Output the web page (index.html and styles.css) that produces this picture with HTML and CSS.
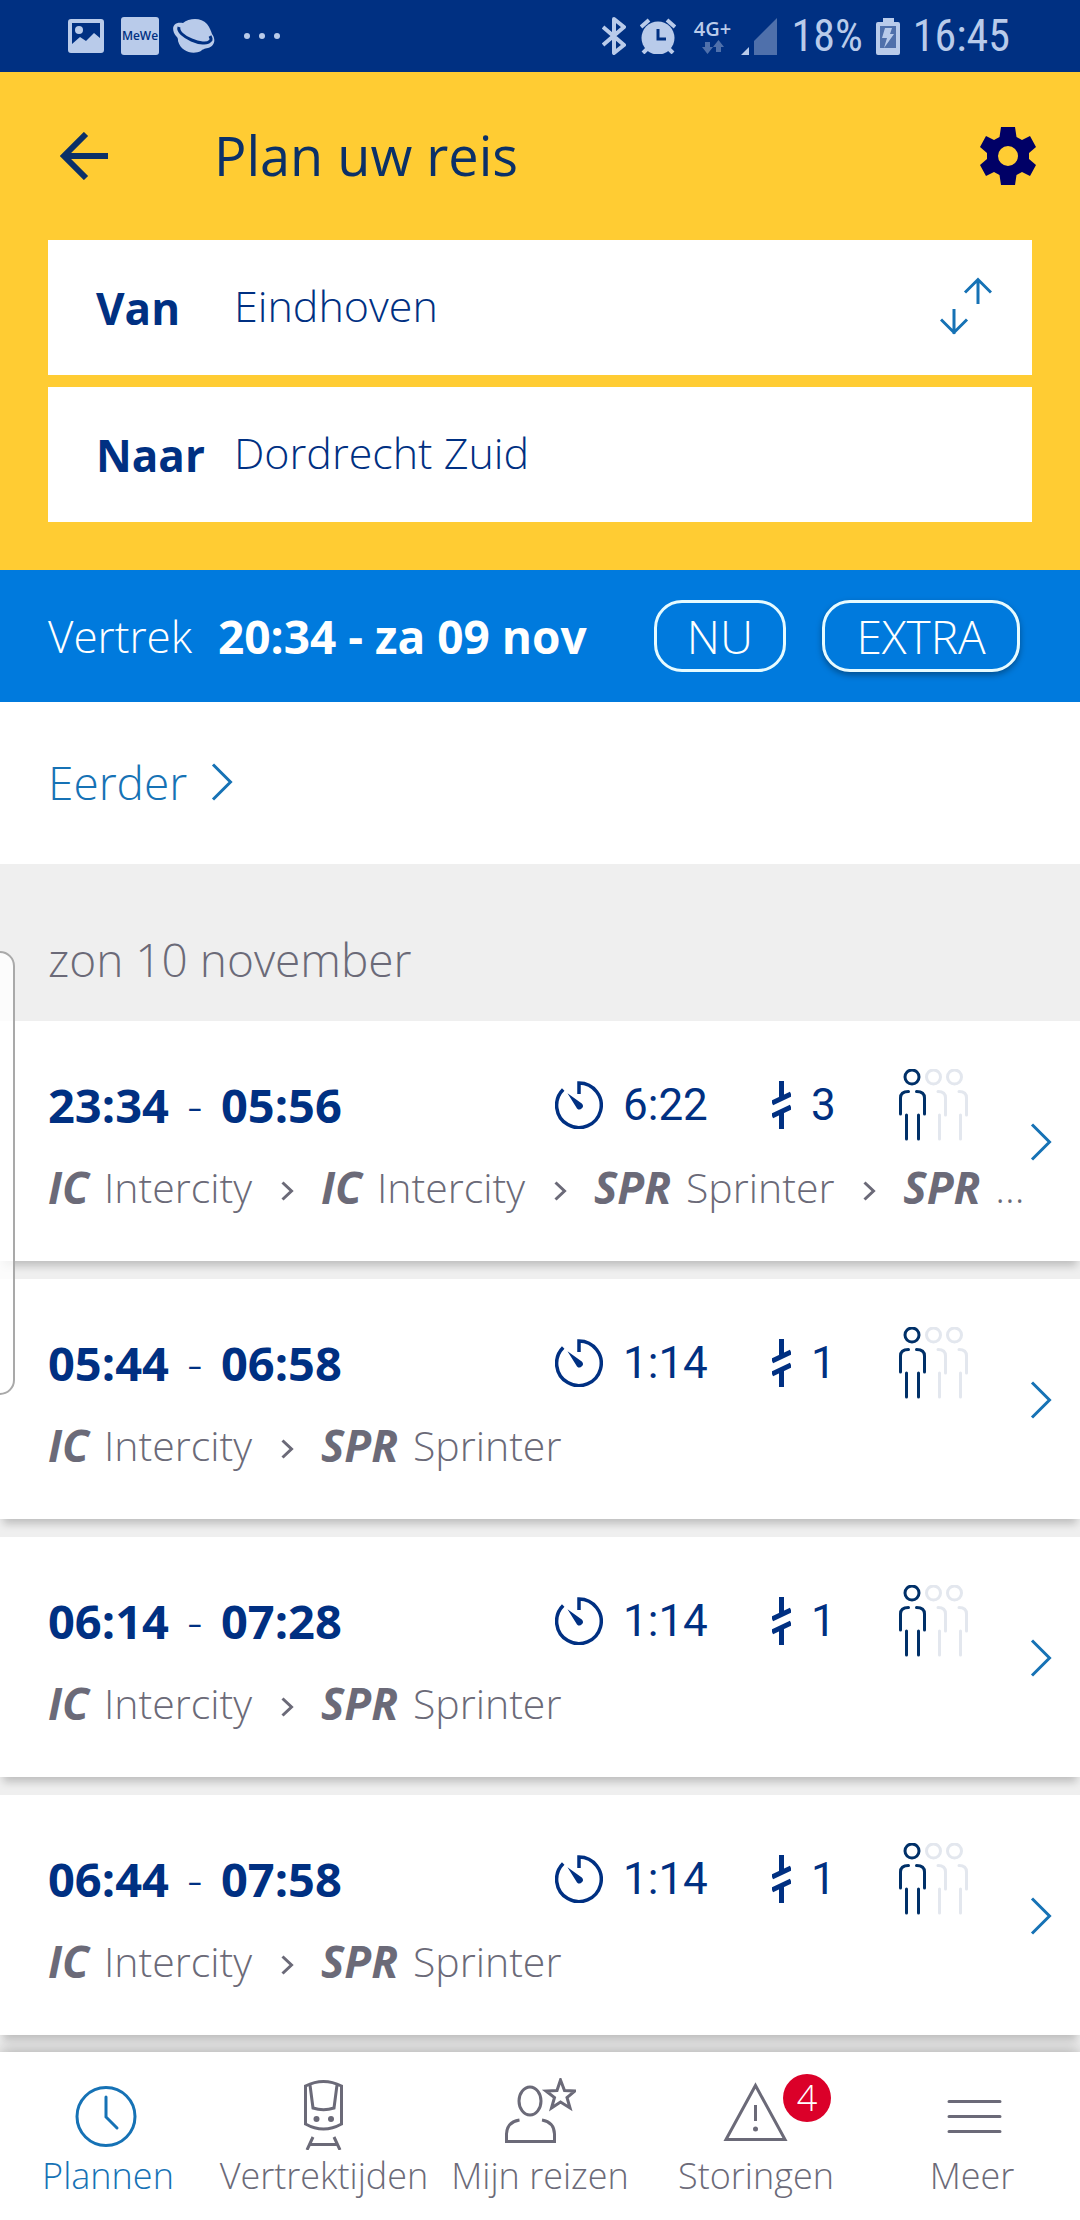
FILE: index.html
```html
<!DOCTYPE html>
<html lang="nl">
<head>
<meta charset="utf-8">
<meta name="viewport" content="width=device-width, initial-scale=1">
<title>Plan uw reis</title>
<link rel="stylesheet" href="styles.css">
</head>
<body>
<svg class="sprite" aria-hidden="true">
  <symbol id="chevron" viewBox="0 0 22 38"><path d="M2 1.5 19.500 19 2 36.500" fill="none" stroke="currentColor" stroke-width="3"/></symbol>
  <symbol id="then" viewBox="0 0 13 20"><path d="M1.500 1.500 10.500 10 1.500 18.500" fill="none" stroke="currentColor" stroke-width="3"/></symbol>
  <symbol id="timer" viewBox="0 0 48 48">
    <path d="M24 13V2A22.300 22.300 0 1 1 8.200 8.500" fill="none" stroke="currentColor" stroke-width="3.500"/>
    <path d="M12.500 12.300 26.800 22.500A3.400 3.400 0 0 1 22 27.400Z" fill="currentColor"/>
  </symbol>
  <symbol id="transfer" viewBox="0 0 19 48"><path d="M9.500 0V17M0 22 19 13M0 35 19 26M9.500 31V48" fill="none" stroke="currentColor" stroke-width="5"/></symbol>
  <symbol id="crowd" viewBox="0 0 70 72">
    <g fill="none" stroke-width="3" stroke-linecap="round">
      <g stroke="#e3e7ee">
        <circle cx="34.500" cy="8" r="7"/><circle cx="55.500" cy="8" r="7"/>
        <path d="M39 22.500Q46.500 22.500 46.500 29V46M40.500 46V70M60 22.500Q67.500 22.500 67.500 29V46M61.500 46V70"/>
      </g>
      <g stroke="#003068">
        <circle cx="13" cy="8" r="7"/>
        <path d="M9.500 22.500Q1.500 22.500 1.500 29V45M17.500 22.500Q25.500 22.500 25.500 29V45M7.500 46V70M19.500 46V70"/>
      </g>
    </g>
  </symbol>
</svg>

<div class="status">
  <div class="status-group">
    <svg class="i-image" viewBox="0 0 36 34"><path fill-rule="evenodd" d="M3 0H33Q36 0 36 3V31Q36 34 33 34H3Q0 34 0 31V3Q0 0 3 0ZM4 4V25L12 18 18 22 26 14 32 19V4Z"/><circle cx="11" cy="11" r="4"/></svg>
    <span class="mewe">MeWe</span>
    <svg class="i-planet" viewBox="0 0 42 34"><path d="M10 4C16-1 28-2 34 5 37 9 38 12 39 15 43 20 42 27 35 29 31 30 30 30 28 32 20 36 8 33 5 22 5 20 5 19 3 17-2 11-1 2 10 4Z"/><path d="M6 8C3 17 32 29 37 22 39 21 38 19 37 17" fill="none" stroke="#003082" stroke-width="3"/></svg>
    <svg class="i-dots" viewBox="0 0 38 8"><circle cx="4" cy="4" r="3"/><circle cx="19" cy="4" r="3"/><circle cx="34" cy="4" r="3"/></svg>
  </div>
  <div class="status-group">
    <svg class="i-bt" viewBox="0 0 24 38"><path d="M1 10 22 28 12 36V2L22 10 1 28" fill="none" stroke="#b9cbea" stroke-width="4" stroke-linejoin="round"/></svg>
    <svg class="i-alarm" viewBox="0 0 36 36"><circle cx="18" cy="20" r="16.500"/><path d="M1 9 9 2M35 9 27 2M7 31 3 35M29 31 33 35" stroke="#b9cbea" stroke-width="4"/><path d="M18 11V21H26" fill="none" stroke="#003082" stroke-width="3"/></svg>
    <div class="net"><span>4G+</span><svg viewBox="0 0 22 14"><path d="M3 2H8V7H11L5.500 14 0 7H3ZM14 12V7H11L16.500 0 22 7H19V12Z"/></svg></div>
    <svg class="i-signal" viewBox="0 0 36 37"><path d="M0 37 8 29V37Z"/><path d="M13 37V23L36 0V37Z" fill="#4f70ab"/></svg>
    <span class="status-text">18%</span>
    <svg class="i-battery" viewBox="0 0 24 37"><path d="M7 0H18V4H22Q24 4 24 6V35Q24 37 22 37H2Q0 37 0 35V6Q0 4 2 4H7Z"/><path d="M4 8H20V30H4Z" fill="#4f70ab"/><path d="M9 10H16L14 16H18L8 30 11 20H6Z"/></svg>
    <span class="status-text">16:45</span>
  </div>
</div>

<header class="planner">
  <div class="title-row">
    <button class="icon-button" aria-label="Terug"><svg class="i-back" viewBox="0 0 48 48"><path d="M26 2 4 24 26 46M4 24H48" fill="none" stroke="#0b3068" stroke-width="6"/></svg></button>
    <h1>Plan uw reis</h1>
    <button class="icon-button" aria-label="Instellingen"><svg class="i-gear" viewBox="0 0 56 58"><path fill="#000066" fill-rule="evenodd" d="M21 0H35L36.500 10 42 13 50 9 56 20 49 26V32L56 38 50 49 42 45 36.500 48 35 58H21L19.500 48 14 45 6 49 0 38 7 32V26L0 20 6 9 14 13 19.500 10ZM28 19A10 10 0 1 0 28 39 10 10 0 1 0 28 19Z"/></svg></button>
  </div>
  <div class="field">
    <label for="from">Van</label>
    <input id="from" type="text" value="Eindhoven">
    <button class="icon-button" aria-label="Wissel"><svg class="i-swap" viewBox="0 0 52 58"><path d="M38 27V2M25 15.500 38 2.500 51 15.500M14 32V57M1 42.500 14 55.500 27 42.500" fill="none" stroke="#1672b5" stroke-width="3"/></svg></button>
  </div>
  <div class="field">
    <label for="to">Naar</label>
    <input id="to" type="text" value="Dordrecht Zuid">
  </div>
</header>

<section class="departure">
  <span class="kind">Vertrek</span>
  <strong>20:34 - za 09 nov</strong>
  <button class="pill now">NU</button>
  <button class="pill extra">EXTRA</button>
</section>

<main>
  <a class="earlier" href="#">Eerder <svg class="i-chevron"><use href="#chevron"/></svg></a>
  <h2>zon 10 november</h2>

  <a class="trip" href="#">
    <div class="trip-main">
      <div class="times"><b>23:34</b><span>-</span><b>05:56</b></div>
      <div class="stat"><svg class="i-timer"><use href="#timer"/></svg>6:22</div>
      <div class="stat"><svg class="i-transfer"><use href="#transfer"/></svg>3</div>
      <svg class="i-crowd"><use href="#crowd"/></svg>
      <div class="legs"><b>IC</b><span>Intercity</span><svg class="i-then"><use href="#then"/></svg><b>IC</b><span>Intercity</span><svg class="i-then"><use href="#then"/></svg><b>SPR</b><span>Sprinter</span><svg class="i-then"><use href="#then"/></svg><b>SPR</b><span>...</span></div>
    </div>
    <svg class="i-chevron"><use href="#chevron"/></svg>
  </a>

  <a class="trip" href="#">
    <div class="trip-main">
      <div class="times"><b>05:44</b><span>-</span><b>06:58</b></div>
      <div class="stat"><svg class="i-timer"><use href="#timer"/></svg>1:14</div>
      <div class="stat"><svg class="i-transfer"><use href="#transfer"/></svg>1</div>
      <svg class="i-crowd"><use href="#crowd"/></svg>
      <div class="legs"><b>IC</b><span>Intercity</span><svg class="i-then"><use href="#then"/></svg><b>SPR</b><span>Sprinter</span></div>
    </div>
    <svg class="i-chevron"><use href="#chevron"/></svg>
  </a>

  <a class="trip" href="#">
    <div class="trip-main">
      <div class="times"><b>06:14</b><span>-</span><b>07:28</b></div>
      <div class="stat"><svg class="i-timer"><use href="#timer"/></svg>1:14</div>
      <div class="stat"><svg class="i-transfer"><use href="#transfer"/></svg>1</div>
      <svg class="i-crowd"><use href="#crowd"/></svg>
      <div class="legs"><b>IC</b><span>Intercity</span><svg class="i-then"><use href="#then"/></svg><b>SPR</b><span>Sprinter</span></div>
    </div>
    <svg class="i-chevron"><use href="#chevron"/></svg>
  </a>

  <a class="trip" href="#">
    <div class="trip-main">
      <div class="times"><b>06:44</b><span>-</span><b>07:58</b></div>
      <div class="stat"><svg class="i-timer"><use href="#timer"/></svg>1:14</div>
      <div class="stat"><svg class="i-transfer"><use href="#transfer"/></svg>1</div>
      <svg class="i-crowd"><use href="#crowd"/></svg>
      <div class="legs"><b>IC</b><span>Intercity</span><svg class="i-then"><use href="#then"/></svg><b>SPR</b><span>Sprinter</span></div>
    </div>
    <svg class="i-chevron"><use href="#chevron"/></svg>
  </a>
</main>

<nav class="tabs">
  <a class="tab active" href="#">
    <svg viewBox="0 0 72 72"><circle cx="34" cy="38.500" r="29"/><path d="M34 19V39L45 50" stroke-linecap="round"/></svg>
    Plannen
  </a>
  <a class="tab" href="#">
    <svg viewBox="0 0 72 72"><path d="M17.500 8Q35.500-1 53.500 8V46Q35.500 56 17.500 46ZM22 7 25 30Q35.500 33.500 46 30L49 7M25 59 19 72M46 59 52 72M22 66.500H49"/><circle class="solid" cx="28.500" cy="41" r="3"/><circle class="solid" cx="43" cy="41" r="3"/></svg>
    Vertrektijden
  </a>
  <a class="tab" href="#">
    <svg viewBox="0 0 72 72"><ellipse cx="26" cy="23" rx="11" ry="14"/><path d="M15.500 42Q3 44 2.500 56V63.500H50.500V56Q50 44 38 42" /><path d="M56.500 2 60.500 12.500 71 13 63 19.500 66 30 56.500 24 47.500 30 50.500 19.500 42 13 53 12.500Z"/></svg>
    Mijn reizen
  </a>
  <a class="tab" href="#">
    <svg viewBox="0 0 72 72"><path d="M35.500 7.500 65 61.500H6ZM35.500 27V43"/><circle class="solid" cx="35.500" cy="51" r="2.500"/></svg>
    <span class="badge">4</span>
    Storingen
  </a>
  <a class="tab" href="#">
    <svg viewBox="0 0 72 72"><path d="M13 23.500H64M13 38.500H64M13 53.500H64" stroke-linecap="round"/></svg>
    Meer
  </a>
</nav>
<div class="edge-panel"></div>
</body>
</html>
```
FILE: styles.css
```css
:root {
  --navy: #003082;
  --link: #1672b5;
  --grey: #6b6a78;
  --status: #b9cbea;
}

* { box-sizing: border-box; }

body {
  margin: 0;
  min-height: 100vh;
  display: flex;
  flex-direction: column;
  background: #efefef;
  font-family: "Open Sans", "Noto Sans", sans-serif;
  font-weight: 340;
  font-size: 46px;
  line-height: 64px;
  color: var(--navy);
}

b { font-weight: 700; }
a { color: inherit; text-decoration: none; }
button, input { font: inherit; color: inherit; background: none; border: 0; padding: 0; margin: 0; }
svg { display: block; flex: none; }
.sprite { position: absolute; width: 0; height: 0; }
.icon-button { flex: none; }

/* Status bar */
.status {
  display: flex;
  justify-content: space-between;
  height: 72px;
  padding: 0 70px 0 68px;
  background: var(--navy);
  color: var(--status);
  fill: var(--status);
}
.status-group { display: flex; align-items: center; }
.status-text { font: 400 44px/72px "Roboto Condensed", Roboto, sans-serif; }
.i-image { width: 36px; height: 34px; margin-right: 17px; }
.mewe {
  width: 38px;
  height: 38px;
  margin-right: 14px;
  border-radius: 3px;
  background: var(--status);
  color: var(--navy);
  font: 600 12px/38px "Open Sans", sans-serif;
  text-align: center;
}
.i-planet { width: 42px; height: 34px; margin-right: 28px; }
.i-dots { width: 38px; height: 8px; }
.i-bt { width: 24px; height: 38px; margin-right: 14px; }
.i-alarm { width: 36px; height: 36px; margin-right: 17px; }
.net {
  display: flex;
  flex-direction: column;
  align-items: center;
  width: 40px;
  margin-right: 8px;
  font: 600 20px/22px "Open Sans", sans-serif;
}
.net svg { width: 22px; height: 14px; fill: #4f70ab; }
.i-signal { width: 36px; height: 37px; margin-right: 15px; }
.i-battery { width: 24px; height: 37px; margin: 0 13px; }

/* Journey form */
.planner {
  display: flex;
  flex-direction: column;
  gap: 12px;
  padding: 36px 48px 48px;
  background: #ffcc33;
}
.title-row {
  display: flex;
  align-items: center;
  height: 96px;
  margin: 0 -4px 24px 12px;
}
h1 {
  flex: 1;
  margin: 0;
  padding: 0 0 2px 106px;
  font-size: 54px;
  line-height: 72px;
  font-weight: 400;
  color: #0b3068;
}
.i-back { width: 48px; height: 48px; }
.i-gear { width: 56px; height: 58px; }
.field {
  display: flex;
  align-items: center;
  height: 135px;
  padding: 0 40px 4px 48px;
  background: #fff;
  font-size: 43px;
}
.field label { width: 138px; padding-top: 4px; font-size: 44px; font-weight: 700; }
.field input { flex: 1; min-width: 0; }
.i-swap { width: 52px; height: 58px; }

/* Departure bar */
.departure {
  display: flex;
  align-items: center;
  height: 132px;
  padding: 0 60px 0 48px;
  background: #007add;
  color: #fff;
}
.kind { width: 170px; font-size: 44px; }
.departure strong { flex: 1; font-weight: 700; }
.pill {
  height: 72px;
  border: 3px solid #e6fbff;
  border-radius: 28px;
  background: #007add;
  text-align: center;
}
.now { width: 132px; margin-right: 36px; }
.extra { width: 198px; box-shadow: 0 3px 6px rgba(0, 0, 0, 0.35); }

/* Results */
main { flex: 1; }
.i-chevron { width: 22px; height: 38px; color: var(--link); }
.earlier {
  display: flex;
  align-items: center;
  gap: 24px;
  height: 162px;
  padding: 0 48px 2px;
  background: #fff;
  color: var(--link);
}
h2 {
  margin: 0;
  padding: 63px 48px 30px;
  font-size: 46px;
  line-height: 64px;
  font-weight: inherit;
  color: var(--grey);
}
.trip {
  display: flex;
  align-items: center;
  gap: 14px;
  margin-bottom: 18px;
  padding: 48px 28px 46px 48px;
  background: #fff;
  box-shadow: 0 8px 8px -3px rgba(0, 0, 0, 0.2);
}
.trip:last-child { margin-bottom: 0; }
.trip-main {
  flex: 1;
  min-width: 0;
  display: grid;
  grid-template-columns: 1fr 217px 127px 117px;
  align-items: center;
  row-gap: 18px;
}
.times { display: flex; font-size: 47px; }
.times span { width: 52px; text-align: center; }
.stat {
  display: flex;
  align-items: center;
  gap: 20px;
  font-family: Roboto, sans-serif;
  font-weight: 400;
  font-size: 44px;
}
.i-timer { width: 48px; height: 48px; }
.i-transfer { width: 19px; height: 48px; }
.i-crowd { width: 70px; height: 72px; }
.legs {
  grid-column: 1 / -1;
  display: flex;
  align-items: center;
  font-size: 41px;
  line-height: 56px;
  white-space: nowrap;
  color: var(--grey);
}
.legs b { margin-right: 15px; font-size: 44px; font-style: italic; }
.i-then { width: 13px; height: 20px; margin: 8px 27px 0 29px; }

/* Tab bar */
.tabs {
  position: sticky;
  bottom: 0;
  display: flex;
  padding: 26px 0 22px;
  background: #fff;
  box-shadow: 0 -3px 14px rgba(0, 0, 0, 0.25);
  color: var(--grey);
  font-size: 36px;
  line-height: 44px;
}
.tab {
  position: relative;
  flex: 1 1 0;
  display: flex;
  flex-direction: column;
  align-items: center;
  gap: 4px;
  white-space: nowrap;
}
.tab svg { width: 72px; height: 72px; fill: none; stroke: currentColor; stroke-width: 3; }
.tab .solid { fill: currentColor; stroke: none; }
.active { color: var(--link); }
.badge {
  position: absolute;
  top: -4px;
  left: calc(50% + 27px);
  width: 48px;
  height: 48px;
  border-radius: 50%;
  background: #db0029;
  color: #fff;
  line-height: 48px;
  text-align: center;
}

/* Handle of the drawer at the screen's edge */
.edge-panel {
  position: absolute;
  left: -4px;
  top: 951px;
  width: 19px;
  height: 444px;
  border: 2px solid #a9a9a9;
  border-radius: 0 15px 15px 0;
  background: rgba(255, 255, 255, 0.8);
}
```
